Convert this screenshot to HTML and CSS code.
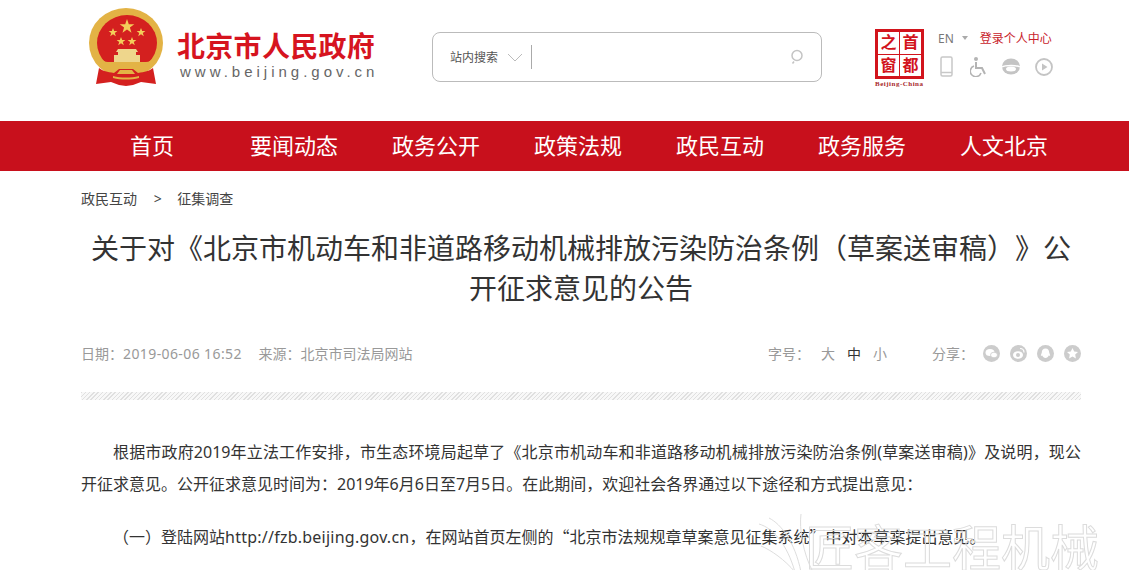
FILE: index.html
```html
<!DOCTYPE html>
<html lang="zh-CN">
<head>
    <meta charset="UTF-8">
    <meta name="viewport" content="width=device-width, initial-scale=1.0">
    <title>北京市人民政府</title>
    <link rel="stylesheet" href="styles.css">
</head>
<body>
    <header class="header">
        <svg class="emblem" viewBox="0 0 74 84">
            <ellipse cx="37" cy="35" rx="37" ry="35" fill="#e3b345"/>
            <ellipse cx="38" cy="35" rx="30" ry="28" fill="#d4201f"/>
            <path d="M38 11l1.800 5.200h5.500l-4.400 3.300 1.600 5.300-4.500-3.200-4.500 3.200 1.600-5.300-4.400-3.300h5.500z" fill="#f3cd5a"/>
            <path d="M24 20l1.200 3h3.200l-2.600 2 1 3.200-2.800-1.900-2.800 1.900 1-3.200-2.600-2h3.200zM52 20l1.200 3h3.200l-2.600 2 1 3.200-2.800-1.900-2.800 1.900 1-3.200-2.600-2h3.200zM32 29l1.200 3h3.200l-2.600 2 1 3.200-2.800-1.900-2.800 1.900 1-3.200-2.600-2h3.200zM43 29l1.200 3h3.200l-2.600 2 1 3.200-2.800-1.900-2.800 1.900 1-3.200-2.600-2h3.200z" fill="#f3cd5a"/>
            <path d="M29 41h18l2 3h-2v3h4v7H25v-7h4v-3h-2z" fill="#eed68c"/>
            <path d="M10 49c3 3 6 5 9 5h38c3 0 6-2 8-5v5c-3 5-7 8-12 9H22c-5-1-9-4-12-9z" fill="#e3b345"/>
            <path d="M10 60c4 3 8 4 15 5l5-4h14l5 4c7-1 11-2 15-5l3 16-15-2-8 3-7 1-7-1-8-3-15 2z" fill="#d4201f"/>
            <path d="M31 62h12l3 4H28zM24 68c8 2 18 2 26 0v2c-8 2-18 2-26 0z" fill="#e3b345"/>
        </svg>
        <div class="site-name">
            <div class="site-title">北京市人民政府</div>
            <div class="site-url">www.beijing.gov.cn</div>
        </div>
        <div class="search">
            <span class="search-type">站内搜索</span>
            <svg class="search-arrow" viewBox="0 0 16 9"><path d="M1 1l7 7 7-7" fill="none" stroke="#bbb"/></svg>
            <span class="search-line"></span>
            <svg class="search-icon" viewBox="0 0 16 16"><circle cx="8" cy="6.500" r="5" fill="none" stroke="#c4c4c4" stroke-width="1.500"/><path d="M5 12.500l-1.500 2" stroke="#c4c4c4" stroke-width="1.500"/></svg>
        </div>
        <div class="seal-box">
            <div class="seal">
                <span>之</span><span>首</span><span>窗</span><span>都</span>
            </div>
            <div class="seal-text">Beijing-China</div>
        </div>
        <div class="tools">
            <div class="tools-top">
                <span class="lang">EN</span>
                <span class="caret"></span>
                <a class="login" href="#">登录个人中心</a>
            </div>
            <div class="tools-icons">
                <svg width="13" height="21" viewBox="0 0 13 21"><rect x="1" y="1" width="11" height="19" rx="1.500" fill="none" stroke="#c8c8c8" stroke-width="1.500"/><path d="M1 16.500h11" stroke="#c8c8c8" stroke-width="1.500"/></svg>
                <svg class="wheel" width="17" height="20" viewBox="0 0 17 20"><circle cx="6" cy="2" r="2" fill="#b4b4b4"/><path d="M6 5v6h6l3 6" fill="none" stroke="#b4b4b4" stroke-width="2"/><path d="M4 9a5.500 5.500 0 1 0 7 7" fill="none" stroke="#b4b4b4" stroke-width="1.500"/></svg>
                <svg width="20" height="17" viewBox="0 0 20 17"><ellipse cx="10" cy="8.500" rx="9" ry="8" fill="#c4c4c4"/><path d="M1 9c3-2 15-2 18 0" fill="none" stroke="#fff" stroke-width="1.500"/><ellipse cx="10" cy="11" rx="5" ry="2.500" fill="#fff"/></svg>
                <svg width="18" height="18" viewBox="0 0 18 18"><circle cx="9" cy="9" r="8" fill="none" stroke="#c4c4c4" stroke-width="1.800"/><path d="M7 5.500l5.500 3.500-5.500 3.500z" fill="#c4c4c4"/></svg>
            </div>
        </div>
    </header>

    <nav class="nav">
        <ul class="nav-list">
            <li><a href="#">首页</a></li>
            <li><a href="#">要闻动态</a></li>
            <li><a href="#">政务公开</a></li>
            <li><a href="#">政策法规</a></li>
            <li><a href="#">政民互动</a></li>
            <li><a href="#">政务服务</a></li>
            <li><a href="#">人文北京</a></li>
        </ul>
    </nav>

    <main class="main">
        <div class="crumbs">
            <a href="#">政民互动</a>
            <span class="crumb-sep">&gt;</span>
            <a href="#">征集调查</a>
        </div>

        <h1 class="title">关于对《北京市机动车和非道路移动机械排放污染防治条例（草案送审稿）》公开征求意见的公告</h1>

        <div class="meta">
            <div class="meta-left">
                <span>日期：<span class="num">2019-06-06 16:52</span></span>
                <span>来源：北京市司法局网站</span>
            </div>
            <div class="meta-right">
                <span class="size-label">字号：</span>
                <span class="size-item">大</span>
                <span class="size-item active">中</span>
                <span class="size-item">小</span>
                <span class="share-label">分享：</span>
                <span class="share-icon"><svg viewBox="0 0 17 17"><ellipse cx="7" cy="7.500" rx="4.500" ry="3.500" fill="#fff"/><ellipse cx="11" cy="10" rx="3.500" ry="2.800" fill="#fff" stroke="#ccc" stroke-width="0.800"/></svg></span>
                <span class="share-icon"><svg viewBox="0 0 17 17"><ellipse cx="8" cy="10" rx="5" ry="3.800" fill="#fff"/><circle cx="8" cy="10" r="2" fill="#ccc"/><path d="M10 3.500c2.500 0 4 1.500 4 4" fill="none" stroke="#fff" stroke-width="1.200"/></svg></span>
                <span class="share-icon"><svg viewBox="0 0 17 17"><path d="M8.500 3.500c2.600 0 3.700 2 3.700 4l1 3c-.5.500-1 .4-1.500 0-.5 1.500-1.800 2.500-3.200 2.500s-2.700-1-3.200-2.500c-.5.400-1 .5-1.500 0l1-3c0-2 1.100-4 3.700-4z" fill="#fff"/></svg></span>
                <span class="share-icon"><svg viewBox="0 0 17 17"><path d="M8.500 3l1.700 3.500 3.800.500-2.800 2.600.7 3.800-3.400-1.900-3.400 1.900.7-3.800-2.800-2.600 3.800-.500z" fill="#fff"/></svg></span>
            </div>
        </div>

        <div class="hatch"></div>

        <div class="content">
            <p>根据市政府2019年立法工作安排，市生态环境局起草了《北京市机动车和非道路移动机械排放污染防治条例(草案送审稿)》及说明，现公开征求意见。公开征求意见时间为：2019年6月6日至7月5日。在此期间，欢迎社会各界通过以下途径和方式提出意见：</p>
            <p>（一）登陆网站<span class="url">http://fzb.beijing.gov.cn</span>，在网站首页左侧的<span class="quote">“</span>北京市法规规章草案意见征集系统<span class="quote">”</span>中对本草案提出意见。</p>
        </div>
    </main>

    <svg class="watermark-logo" viewBox="0 0 60 60">
        <path d="M4 12c14 4 28 20 36 48M14 6c12 6 26 24 32 54M46 2c-2 14 2 40 12 58M40 60C30 48 16 38 6 34" fill="none" stroke="#dedede"/>
    </svg>
    <div class="watermark">匠客工程机械</div>
</body>
</html>
```

FILE: styles.css
```css
html, body {
    margin: 0;
    padding: 0;
    height: 570px;
    overflow: hidden;
}

body {
    font-family: "Noto Sans", "Noto Sans CJK SC", sans-serif;
    background-color: #fff;
    color: #333;
    position: relative;
    text-spacing-trim: space-all;
}

a {
    color: inherit;
    text-decoration: none;
}

/* Header */
.header {
    height: 121px;
    display: flex;
    align-items: flex-start;
    padding-left: 89px;
    box-sizing: border-box;
}

.emblem {
    width: 74px;
    height: 84px;
    margin-top: 8px;
    flex: none;
}

.site-name {
    margin-left: 14px;
    margin-top: 30px;
    width: 255px;
    flex: none;
}

.site-title {
    font-size: 28px;
    line-height: 32px;
    font-weight: 700;
    color: #d6141f;
    letter-spacing: 0.300px;
    white-space: nowrap;
}

.site-url {
    font-family: "Liberation Sans", sans-serif;
    font-size: 15px;
    line-height: 20px;
    letter-spacing: 4px;
    color: #666;
    margin-left: 3px;
    white-space: nowrap;
}

.search {
    width: 390px;
    height: 50px;
    margin-top: 32px;
    border: 1px solid #bbb;
    border-radius: 8px;
    box-sizing: border-box;
    display: flex;
    align-items: center;
    padding-left: 17px;
    flex: none;
}

.search-type {
    font-size: 12px;
    color: #555;
    width: 48px;
    white-space: nowrap;
}

.search-arrow {
    width: 16px;
    height: 9px;
    margin-left: 9px;
}

.search-line {
    width: 1px;
    height: 24px;
    background-color: #aaa;
    margin-left: 8px;
}

.search-icon {
    width: 16px;
    height: 16px;
    margin-left: auto;
    margin-right: 16px;
}

.seal-box {
    margin-left: 53px;
    margin-top: 29px;
    width: 52px;
    flex: none;
}

.seal {
    width: 49px;
    height: 50px;
    box-sizing: border-box;
    border: 3px solid #d2141c;
    display: grid;
    grid-template-columns: 1fr 1fr;
    grid-template-rows: 1fr 1fr;
    gap: 1px;
    background-color: #d2141c;
}

.seal span {
    background-color: #fff;
    color: #d2141c;
    font-size: 16px;
    font-weight: 700;
    line-height: 21px;
    text-align: center;
    overflow: hidden;
}

.seal-text {
    font-family: "Liberation Serif", serif;
    font-size: 7px;
    line-height: 8px;
    font-weight: 700;
    color: #a8292c;
    margin-top: 1px;
    letter-spacing: 0.500px;
    white-space: nowrap;
}

.tools {
    margin-left: 11px;
    margin-top: 29px;
    flex: none;
}

.tools-top {
    display: flex;
    align-items: center;
    height: 18px;
    font-size: 12px;
    white-space: nowrap;
}

.lang {
    color: #777;
}

.caret {
    width: 0;
    height: 0;
    border: 3px solid transparent;
    border-top: 4px solid #aaa;
    border-bottom: 0;
    margin-left: 8px;
}

.login {
    color: #c8232c;
    margin-left: 12px;
}

.tools-icons {
    display: flex;
    align-items: center;
    gap: 14px;
    margin-top: 9px;
    margin-left: 2px;
}

.wheel {
    margin-left: 3px;
}

/* Nav */
.nav {
    height: 50px;
    background-color: #c8101c;
}

.nav-list {
    list-style: none;
    margin: 0;
    padding: 0 0 0 81px;
    display: flex;
}

.nav-list li {
    width: 142px;
    text-align: center;
    font-size: 22px;
    line-height: 49px;
    color: #fff;
    white-space: nowrap;
}

/* Article */
.main {
    width: 1000px;
    margin-left: 81px;
}

.crumbs {
    height: 57px;
    line-height: 55px;
    font-size: 14px;
    color: #444;
}

.crumb-sep {
    margin: 0 12px 0 13px;
}

.title {
    margin: 0;
    font-size: 28px;
    line-height: 40px;
    font-weight: 400;
    text-align: center;
    color: #333;
}

.meta {
    display: flex;
    justify-content: space-between;
    align-items: center;
    margin-top: 33px;
    height: 24px;
    font-size: 14px;
    color: #999;
}

.num {
    letter-spacing: 0.400px;
}

.meta-left span + span {
    margin-left: 13px;
}

.meta-right {
    display: flex;
    align-items: center;
}

.size-item {
    margin-left: 12px;
}

.size-label + .size-item {
    margin-left: 11px;
}

.size-item.active {
    color: #333;
}

.share-label {
    margin-left: 45px;
    margin-right: 9px;
}

.share-icon {
    width: 17px;
    height: 17px;
    border-radius: 50%;
    background-color: #ccc;
    margin-left: 10px;
    display: block;
}

.share-label + .share-icon {
    margin-left: 0;
}

.share-icon svg {
    display: block;
}

.hatch {
    height: 8px;
    margin-top: 27px;
    background: repeating-linear-gradient(135deg, #e0e0e0 0, #e0e0e0 1px, #f8f8f8 1px, #f8f8f8 3px);
}

.content {
    margin-top: 36px;
    font-size: 16px;
    line-height: 32px;
    color: #333;
}

.content p {
    margin: 0 0 20px;
    text-indent: 2em;
    text-align: justify;
}

.url {
    letter-spacing: 0.240px;
}

.quote {
    font-family: "Noto Sans CJK SC", sans-serif;
}

/* Image watermark in the bottom corner */
.watermark {
    position: absolute;
    left: 805px;
    top: 517px;
    font-size: 49px;
    line-height: 60px;
    color: transparent;
    -webkit-text-stroke: 1px #dcdcdc;
    white-space: nowrap;
}

.watermark-logo {
    position: absolute;
    left: 755px;
    top: 512px;
    width: 60px;
    height: 60px;
}
```
